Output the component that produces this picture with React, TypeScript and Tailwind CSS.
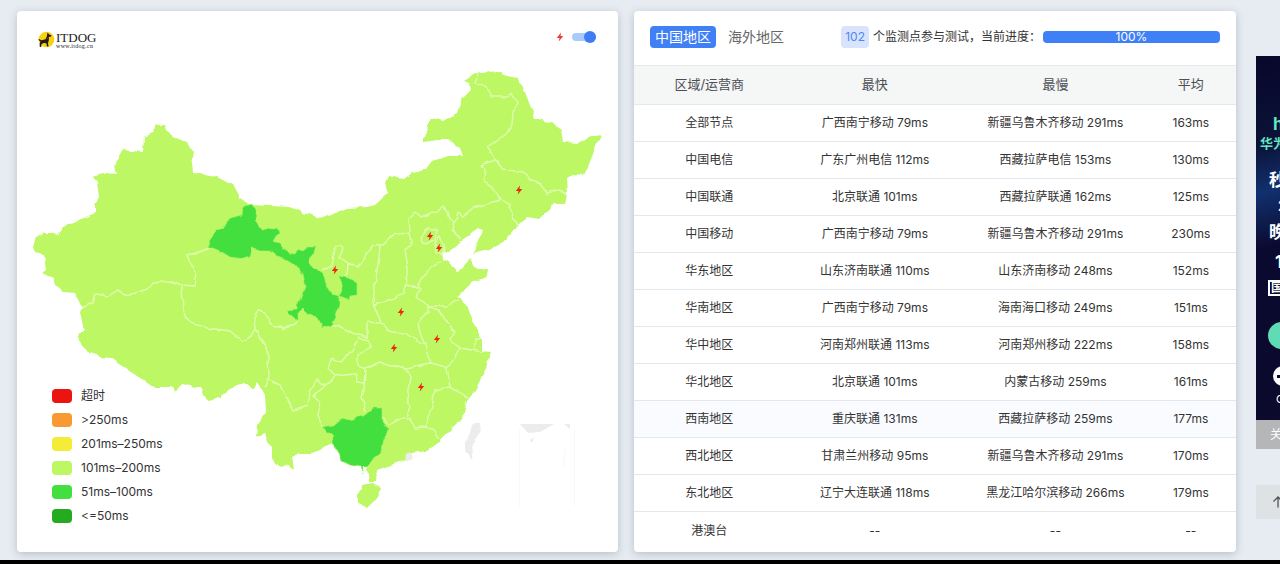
import { useState } from "react";

const OUTLINE =
  "M33 246 36 238 45 233 52 233 57 235 63 227 75 222 95 213 95 205 99 197 97 182 93 177 107 173 116 174 114 167 122 150 143 152 144 137 153 133 157 125 164 125 167 132 176 138 187 142 194 153 192 163 193 173 217 177 234 186 240 197 245 203 252 205 290 207 303 213 323 218 347 208 367 207 375 205 388 193 385 183 388 176 403 179 413 173 427 169 432 162 448 156 463 156 460 148 448 140 438 140 423 142 423 138 432 118 443 121 457 113 462 98 470 90 469 83 464 81 475 74 497 71 507 76 517 78 523 87 528 100 535 118 552 123 561 129 563 142 578 143 587 138 601 135 597 143 590 162 584 175 573 174 566 178 567 195 565 203 555 203 540 219 527 217 517 227 510 235 503 242 492 248 474 253 475 247 483 230 477 228 468 237 460 242 450 251 442 252 443 259 455 267 457 273 471 258 473 267 488 269 487 277 472 282 458 297 467 305 473 322 482 340 482 351 490 352 488 362 483 375 475 390 467 400 463 417 452 428 438 443 427 451 412 453 405 460 388 466 377 470 376 482 369 482 367 467 363 467 363 473 361 467 350 465 340 460 338 452 331 443 320 450 312 453 300 453 292 457 294 470 288 464 280 467 272 458 272 447 267 442 265 433 256 437 257 425 266 412 265 395 258 382 253 388 245 383 237 385 223 393 222 398 207 400 200 388 182 384 176 393 174 387 153 387 140 378 128 370 110 358 100 357 82 347 78 333 84 330 80 312 82 308 75 293 63 292 55 285 53 278 43 273 47 270 45 255 35 253Z";

const HAINAN = "M362 485 372 483 381 487 377 497 367 507 358 504 358 492Z";

const GANSU =
  "M208 248 215 230 222 229 225 223 233 217 242 215 243 207 252 204 257 216 255 220 263 231 277 227 279 233 273 241 280 243 288 253 295 254 297 249 303 251 308 247 316 247 313 254 308 260 312 267 323 273 327 287 332 295 339 297 339 305 335 312 336 317 332 325 322 328 318 317 308 315 303 309 298 313 298 320 293 317 287 310 297 309 297 305 306 287 303 275 297 267 287 260 280 258 272 251 260 251 252 248 250 257 243 259 230 257 222 252 213 248Z M339 276 345 276 357 283 357 295 350 296 349 300 339 297 343 288Z";

const GUANGXI =
  "M322 427 333 425 343 418 350 420 365 415 373 408 382 408 382 420 388 430 383 443 382 452 373 458 367 467 363 467 363 473 361 467 350 465 340 460 338 452 331 443 334 437 330 433 327 433Z";

const BORDERS = [
  "M82 308 92 303 96 294 108 296 117 291 130 295 150 288 153 283 170 281 182 285",
  "M182 285 194 286 196 273 190 262 187 256 210 248",
  "M182 285 183 312 190 322 207 328 230 331 242 341 250 337 255 329",
  "M255 329 263 340 268 357 269 377 265 387",
  "M255 329 254 317 258 310 265 313 270 323 283 329 295 323 299 319",
  "M323 270 332 266 335 248 340 245 343 248 339 258 348 263 347 274 341 277",
  "M348 263 357 267 365 257 373 246 383 245 393 235 410 232",
  "M380 245 379 257 376 277 373 303 378 315 382 323",
  "M374 305 392 300 405 292 405 285",
  "M410 232 412 243 405 250 408 268 405 285",
  "M410 232 409 218 415 212 420 217 435 212 443 206 448 212 450 218 455 223",
  "M455 223 453 230 460 239",
  "M455 223 458 212 463 216 473 208 500 200",
  "M500 200 493 188 484 180 485 168 480 165 496 160",
  "M500 198 510 205 513 217 517 226",
  "M496 160 502 169 523 172 530 179 540 184 547 193 560 189 567 196",
  "M496 160 493 155 487 147 505 135 512 125 513 112 518 103 512 94 507 97 492 97 487 87 475 83 478 74",
  "M405 285 418 287 422 277 432 267 442 261",
  "M420 287 417 298 428 306 447 306 458 300",
  "M422 242 423 235 428 228 437 230 435 240 428 243Z",
  "M435 243 440 237 444 247 442 255 436 253Z",
  "M380 323 392 332 405 333 420 343 425 345",
  "M428 306 428 313 418 322 420 333 425 345 427 353 430 363",
  "M428 306 440 312 448 323 455 332 450 340 460 348 452 363 447 367",
  "M460 348 472 350 482 352 M475 349 475 338 480 338",
  "M430 363 447 367 450 387 463 395 468 397",
  "M450 387 435 390 432 407 425 427 432 428 439 440",
  "M405 368 410 377 407 397 410 407 407 418",
  "M430 363 420 365 407 369 387 365 380 362 365 368",
  "M365 368 364 390 362 397 366 412",
  "M382 417 389 425 402 418 410 418 415 428 425 427",
  "M269 380 280 385 293 410 308 405 310 392 317 380 322 385 332 380",
  "M332 380 313 395 320 403 318 415 322 427",
  "M332 380 335 375 355 373 358 382 364 383",
  "M335 375 328 368 332 358 342 362 353 350 358 338 368 340 370 348 358 355 358 365 365 368",
  "M332 325 337 325 353 333 367 337 367 322 380 323",
].join(" ");

const BOLTS = [
  [519, 190],
  [430, 236],
  [439, 248],
  [335, 270],
  [401, 312],
  [394, 348],
  [437, 339],
  [421, 387],
];

const BOLT_PATH = "M1-4.600-3.200.9H-.5L-1.200 4.600 3.200-1H.5Z";

const LEGEND = [
  ["bg-[#ea1410]", "超时"],
  ["bg-[#f79a34]", ">250ms"],
  ["bg-[#f5ec3a]", "201ms–250ms"],
  ["bg-[#bdf764]", "101ms–200ms"],
  ["bg-[#43df3f]", "51ms–100ms"],
  ["bg-[#24ab20]", "<=50ms"],
];

const ROWS = [
  ["全部节点", "广西南宁移动 79ms", "新疆乌鲁木齐移动 291ms", "163ms"],
  ["中国电信", "广东广州电信 112ms", "西藏拉萨电信 153ms", "130ms"],
  ["中国联通", "北京联通 101ms", "西藏拉萨联通 162ms", "125ms"],
  ["中国移动", "广西南宁移动 79ms", "新疆乌鲁木齐移动 291ms", "230ms"],
  ["华东地区", "山东济南联通 110ms", "山东济南移动 248ms", "152ms"],
  ["华南地区", "广西南宁移动 79ms", "海南海口移动 249ms", "151ms"],
  ["华中地区", "河南郑州联通 113ms", "河南郑州移动 222ms", "158ms"],
  ["华北地区", "北京联通 101ms", "内蒙古移动 259ms", "161ms"],
  ["西南地区", "重庆联通 131ms", "西藏拉萨移动 259ms", "177ms"],
  ["西北地区", "甘肃兰州移动 95ms", "新疆乌鲁木齐移动 291ms", "170ms"],
  ["东北地区", "辽宁大连联通 118ms", "黑龙江哈尔滨移动 266ms", "179ms"],
  ["港澳台", "--", "--", "--"],
];

function ChinaMap() {
  return (
    <svg viewBox="17 11 601 541" className="col-start-1 row-start-1 block w-full" role="img">
      <filter id="rough" x="0" y="0" width="640" height="560" filterUnits="userSpaceOnUse" colorInterpolationFilters="sRGB">
        <feTurbulence type="fractalNoise" baseFrequency="0.14" numOctaves="1" seed="4" />
        <feDisplacementMap in="SourceGraphic" scale="5" xChannelSelector="R" yChannelSelector="G" />
      </filter>
      <g filter="url(#rough)" strokeLinejoin="round">
        <path d={OUTLINE} fill="#bdf764" />
        <path d={HAINAN} fill="#bdf764" />
        <path d={BORDERS} fill="none" stroke="#dffcb2" strokeWidth="1.400" />
        <path d={GANSU} fill="#43df3f" stroke="#a8f36a" strokeWidth="0.6" />
        <path d={GUANGXI} fill="#43df3f" stroke="#a8f36a" strokeWidth="0.6" />
        <circle cx="409" cy="457" r="3.5" fill="#ececec" />
        <path d="M475 422 481 422 479 432 473 448 472 460 465 450 465 443 470 430Z" fill="#ececec" />
      </g>
      <path d="M520 424H554L540 432 528 433Z M564 424H570V429Z M530 440 534 437 532 443Z" fill="#ececec" />
      <path d="M519.500 430V506 M574.500 430V506 M565 446V456L563 468" fill="none" stroke="#f8f8f8" />
      {BOLTS.map(([x, y]) => (
        <path key={`${x}-${y}`} d={BOLT_PATH} fill="#e82a10" transform={`translate(${x} ${y})`} />
      ))}
    </svg>
  );
}

function Logo() {
  return (
    <a href="#" className="flex items-center gap-px text-[#222]">
      <svg width="18" height="18" viewBox="0 0 18 18">
        <circle cx="9.500" cy="8.500" r="7.800" fill="#f8d210" />
        <path d="M10.500 1.500 12.200 3.400 14.500 4.400 14 5.600 12 6 11.800 9.500 11 12 11.500 15.500H10L9.300 12.200 6.500 12 4.500 13.300 4.200 16H2.800L2.600 12.500 3.500 10.500 1.500 9 1.800 8 4.500 9.200 8.500 8.300 9.800 5.500Z" fill="#241c14" />
        <path d="M11.800 6.200 9.800 8.200" stroke="#c43a1a" strokeWidth="0.8" />
      </svg>
      <span className="flex flex-col font-['Liberation_Serif',serif]">
        <span className="text-[13px] leading-[12px]">ITDOG</span>
        <span className="text-[6px] leading-[5px] tracking-wider">www.itdog.cn</span>
      </span>
    </a>
  );
}

function MapCard() {
  const [on, setOn] = useState(true);
  return (
    <section className="grid min-w-0 flex-[601] rounded bg-white shadow-[0_2px_9px_rgba(60,75,95,0.28)]">
      <ChinaMap />
      <div className="col-start-1 row-start-1 flex items-start justify-between self-start pt-5 pr-[22px] pl-5">
        <Logo />
        <label className="flex items-center gap-2">
          <svg width="8" height="12" viewBox="-4 -6 8 12">
            <path d={BOLT_PATH} fill="#ec3a34" />
          </svg>
          <span className="relative flex h-3 w-6 items-center">
            <input
              type="checkbox"
              aria-label="超时"
              checked={on}
              onChange={(e) => setOn(e.target.checked)}
              className="peer h-2 w-6 appearance-none rounded-full bg-gray-300 checked:bg-[#a9cbfb]"
            />
            <span className="pointer-events-none absolute top-0 left-0 size-3 rounded-full bg-gray-500 peer-checked:left-3 peer-checked:bg-[#3f7df5]" />
          </span>
        </label>
      </div>
      <ul className="col-start-1 row-start-1 flex flex-col self-end justify-self-start pb-6 pl-[35px]">
        {LEGEND.map(([color, label]) => (
          <li key={label} className="flex h-6 items-center gap-[9px] text-[12px] text-[#333]">
            <span className={`h-[14px] w-5 rounded ${color}`} />
            {label}
          </li>
        ))}
      </ul>
    </section>
  );
}

function ResultCard() {
  return (
    <section className="min-w-0 flex-[602] rounded bg-white pb-[3px] shadow-[0_2px_9px_rgba(60,75,95,0.28)]">
      <header className="flex h-[54px] items-center justify-between px-4 pb-[2px]">
        <nav className="flex items-center gap-[7px] text-[14px]">
          <button className="h-[22px] rounded bg-[#4080f7] px-[5px] leading-[22px] text-white">中国地区</button>
          <button className="h-[22px] px-[5px] leading-[22px] text-[#666]">海外地区</button>
        </nav>
        <div className="flex items-center text-[12px] whitespace-nowrap text-[#333]">
          <span className="mr-1 h-[22px] rounded-sm bg-[#d8e4fd] px-1 text-[12px] leading-[22px] text-[#5088f0]">102</span>
          <span>个监测点参与测试，当前进度：</span>
          <div
            role="progressbar"
            aria-label="当前进度"
            aria-valuenow={100}
            className="ml-[2px] h-3 w-[177px] rounded bg-[#4080f7] text-center leading-3 text-white"
          >
            100%
          </div>
        </div>
      </header>
      <table className="w-full table-fixed border-separate border-spacing-0 text-center text-[12px] text-[#333]">
        <thead className="bg-[#f5f6f6] text-[13px] text-[#4a4f55]">
          <tr className="h-10 *:border-y *:border-[#e6e9ec] *:p-0 *:font-normal">
            <th className="w-1/4">区域/运营商</th>
            <th className="w-[30%]">最快</th>
            <th className="w-[30%]">最慢</th>
            <th className="w-[15%]">平均</th>
          </tr>
        </thead>
        <tbody>
          {ROWS.map((row) => (
            <tr
              key={row[0]}
              className={`h-[37px] *:border-b *:border-[#e2e8ee] *:p-0 last:*:border-b-0 ${row[0] === "西南地区" ? "bg-[#f9fbff]" : ""}`}
            >
              {row.map((cell, i) => (
                <td key={i}>{cell}</td>
              ))}
            </tr>
          ))}
        </tbody>
      </table>
    </section>
  );
}

function SideRail() {
  return (
    <aside className="w-6 overflow-hidden pt-[45px] whitespace-nowrap">
      <div className="h-[364px] w-40 bg-[#0b0b2e] bg-linear-[165deg,#07072a_0%,#0b1238_22%,#12306e_34%,#0a0a30_48%,#0c0a2c_100%] pt-[58px] font-bold text-white">
        <p className="pl-[17px] text-[17px] leading-[20px] text-[#5fe6c0]">hwy</p>
        <p className="pl-1 text-[13px] leading-[18px] text-[#5fe6c0]">华为云</p>
        <p className="pt-3 pl-[13px] text-[17px] leading-[32px]">秒杀</p>
        <p className="pl-[22px] text-[15px] leading-[20px]">2核</p>
        <p className="pl-[13px] text-[17px] leading-[32px]">晚8点</p>
        <p className="pl-[19px] text-[18px] leading-[28px]">1折</p>
        <p className="ml-3 mt-1 flex h-4 w-24 items-center border-2 border-white pl-px text-[12px] leading-3">国内</p>
        <div className="mt-[26px] ml-3 h-[27px] w-24 rounded-full bg-[#5fdcb4]" />
        <div className="mt-[17px] ml-[17px] flex size-5 items-center rounded-full bg-white">
          <span className="ml-1 h-[3px] w-3 bg-[#0b0b2e]" />
        </div>
        <p className="pt-1 pl-[20px] text-[11px] leading-[18px] font-normal">CLOUD</p>
      </div>
      <button className="block h-[29px] w-40 bg-[#b5b6b8] pl-[14px] text-left text-[12px] text-white">关闭广告</button>
      <button className="mt-9 flex h-[34px] w-40 items-center bg-[#dfe2e4] pl-[17px] text-[#555]" aria-label="返回顶部">
        <svg width="10" height="12" viewBox="0 0 10 12" fill="none" stroke="currentColor" strokeWidth="1.300">
          <path d="M.5 5.500 5 1 9.500 5.500M5 1V11.500" />
        </svg>
      </button>
    </aside>
  );
}

export default function App() {
  return (
    <div className="overflow-x-hidden bg-[#e7ecf2] font-[Inter,'Noto_Sans_CJK_SC',sans-serif]">
      <main className="flex pt-[11px] pb-2 pl-[17px]">
        <div className="flex min-w-0 flex-1 items-start gap-4 pr-5">
          <MapCard />
          <ResultCard />
        </div>
        <SideRail />
      </main>
      <footer className="h-1 bg-black" />
    </div>
  );
}
